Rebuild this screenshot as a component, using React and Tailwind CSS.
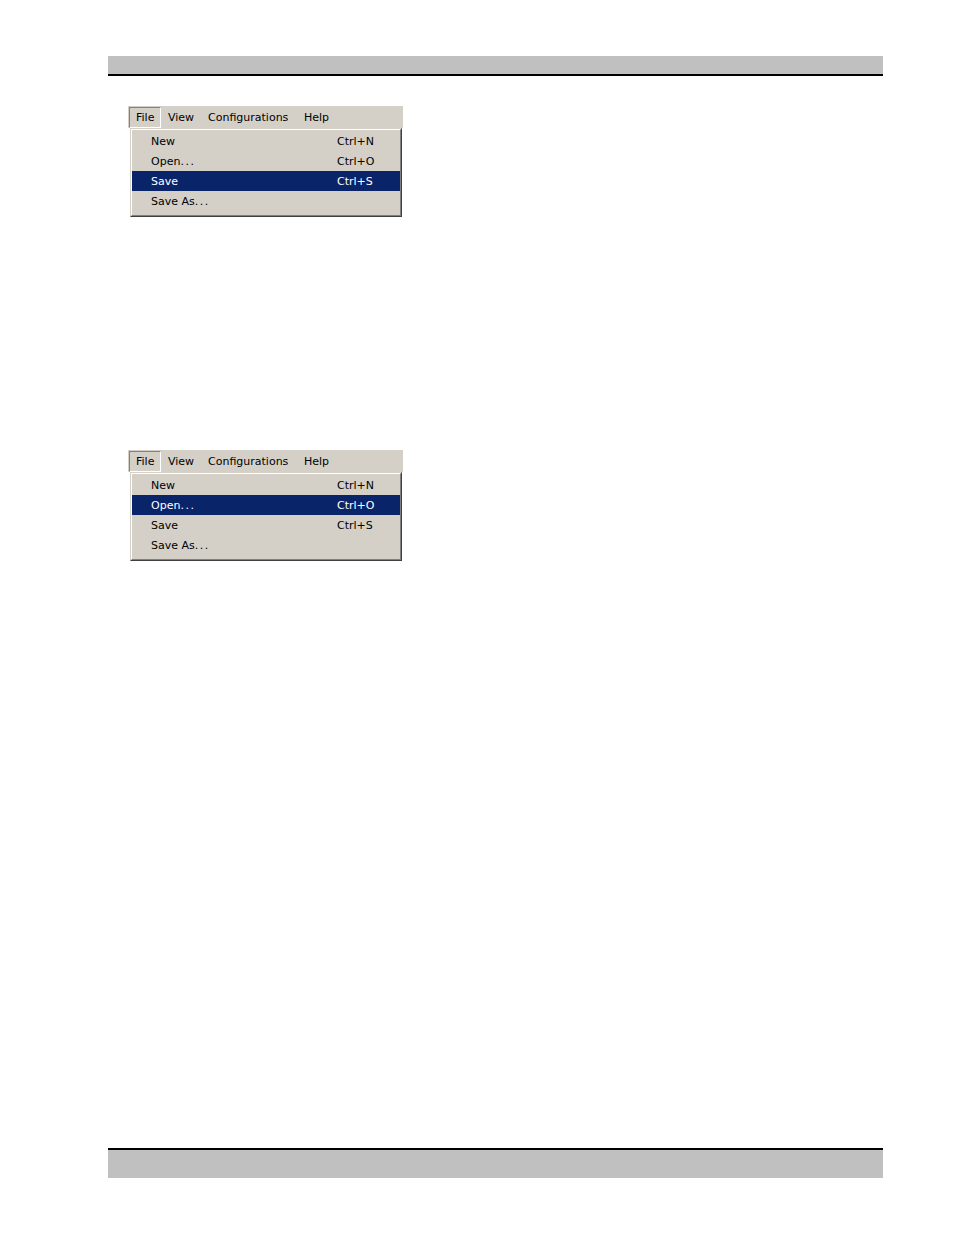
import React from "react";

function Label({ text }) {
  const m = text.match(/^(.*?)(\.\.\.)$/);
  if (!m) return text;
  return (
    <>
      {m[1]}
      <span className="tracking-[1.5px]">{m[2]}</span>
    </>
  );
}

function Menu({ active }) {
  const items = [
    ["New", "Ctrl+N"],
    ["Open...", "Ctrl+O"],
    ["Save", "Ctrl+S"],
    ["Save As...", ""],
  ];
  return (
    <div className="w-[275px] text-[11px] leading-none text-black" style={{ fontFamily: '"DejaVu Sans", Verdana, sans-serif' }}>
      <div className="flex h-[22px] items-stretch bg-[#d4d0c8] pl-[1px] pt-[1px]">
        <div className="flex w-[32px] items-center border border-t-[#808080] border-l-[#808080] border-r-white border-b-white pl-[6px]">File</div>
        <div className="flex w-[40px] items-center pl-[7px]">View</div>
        <div className="flex w-[96px] items-center pl-[7px]">Configurations</div>
        <div className="flex w-[60px] items-center pl-[7px]">Help</div>
      </div>
      <div className="ml-[2px] w-[272px] border-t border-l border-t-[#d4d0c8] border-l-[#d4d0c8] border-r border-b border-r-[#404040] border-b-[#404040]">
        <div className="border-t border-l border-t-white border-l-white border-r border-b border-r-[#808080] border-b-[#808080] bg-[#d4d0c8] pt-[1px] pb-[4px]">
          {items.map(([label, sc]) => (
            <div
              key={label}
              className={
                "flex h-[20px] items-center " +
                (label === active ? "bg-[#0a246a] text-white" : "")
              }
            >
              <span className="w-[205px] pl-[19px]"><Label text={label} /></span>
              <span>{sc}</span>
            </div>
          ))}
        </div>
      </div>
    </div>
  );
}

export default function App() {
  return (
    <div className="relative h-[1235px] w-[954px] bg-white">
      <div className="pt-[56px] pl-[108px]">
        <div className="h-[20px] w-[775px] border-b-2 border-black bg-[#c0c0c0]" />
        <div className="mt-[30px] ml-[20px]">
          <Menu active="Save" />
        </div>
        <div className="mt-[233px] ml-[20px]">
          <Menu active="Open..." />
        </div>
        <div className="mt-[587px] h-[30px] w-[775px] border-t-2 border-black bg-[#c0c0c0]" />
      </div>
    </div>
  );
}
